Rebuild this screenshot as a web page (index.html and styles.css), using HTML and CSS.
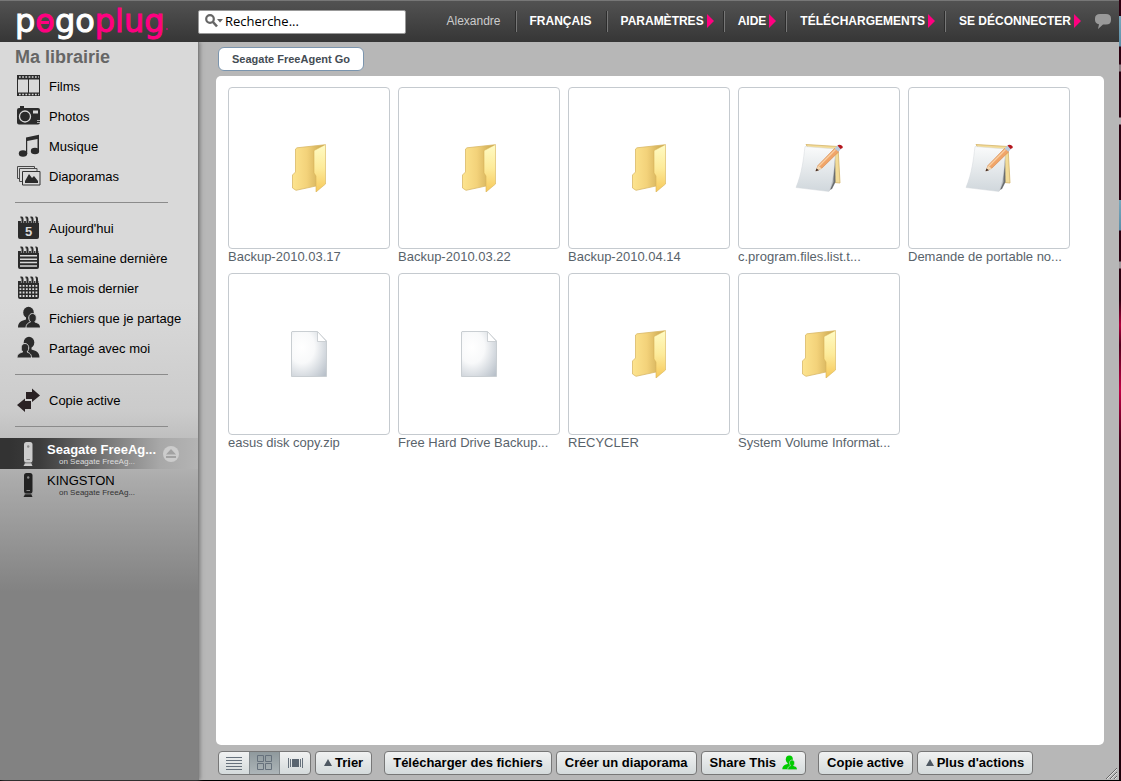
FILE: index.html
```html
<!DOCTYPE html>
<html lang="fr">
<head>
<meta charset="utf-8">
<title>Pogoplug</title>
<link rel="stylesheet" href="styles.css">
</head>
<body>
<svg class="defs" aria-hidden="true">
  <defs>
    <linearGradient id="g-back" x1="0" x2="1" y1="0" y2="0"><stop offset="0" stop-color="#fde48f"/><stop offset=".45" stop-color="#f3d27a"/><stop offset="1" stop-color="#c7a44e"/></linearGradient>
    <linearGradient id="g-front" x1="0" x2="0" y1="0" y2="1"><stop offset="0" stop-color="#fffbc4"/><stop offset=".5" stop-color="#fdeb9a"/><stop offset="1" stop-color="#f6c85a"/></linearGradient>
    <linearGradient id="g-note" x1="0" x2="0" y1="0" y2="1"><stop offset="0" stop-color="#fafbfb"/><stop offset="1" stop-color="#d0d7dc"/></linearGradient>
    <radialGradient id="g-file" cx=".3" cy=".35" r=".9"><stop offset="0" stop-color="#fff"/><stop offset=".4" stop-color="#f8f9fa"/><stop offset="1" stop-color="#b9c1ca"/></radialGradient>
    <symbol id="folder" viewBox="0 0 48 48">
      <path d="M10.500 5 12 3.800 39.500.800V38L31 42 11 46.300 7.500 44V31L10.500 28Z" fill="url(#g-back)" stroke="#d9b968" stroke-width=".8"/>
      <path d="M29 6.500 40.500.500V40L31 48V32L29 29Z" fill="url(#g-front)" stroke="#d8b357" stroke-width=".6"/>
    </symbol>
    <symbol id="note" viewBox="0 0 48 48">
      <path d="M11 .500 43 2.500 45 39 34 38Z" fill="#f3dc98" stroke="#d4b468" stroke-width=".8"/>
      <path d="M40 6 40.500 38 37 45 32 47Z" fill="#6b6e70"/>
      <path d="M38 6 38.500 38 34.500 47 30 46Z" fill="#b4b8bb"/>
      <path d="M10 2.500 40.500 5C39.500 23 39 34 34 47.500L1 43.500C7 29 8.500 15 10 2.500Z" fill="url(#g-note)" stroke="#d4d9dc" stroke-width=".5"/>
      <path d="M21 27 23 21.500 40 4 44 7.500 27 24Z" fill="#f0a569" stroke="#d48448" stroke-width=".6"/>
      <path d="M24 22 40.500 5.500" stroke="#fad0a2" stroke-width="1.200"/>
      <path d="M21 27 23 21.500 26.800 24.500Z" fill="#f2d7b2"/><path d="M20.500 27.300 21.500 24.600 24 26.300Z" fill="#3c2b24"/>
      <path d="M39.500 4.500 43 1.200 46.500 4.500 43.500 7.800Z" fill="#b9cbdc"/>
      <path d="M42.500 1.500C44-.500 49 1.500 47.500 4L45.500 5Z" fill="#b5161c"/>
    </symbol>
    <symbol id="file" viewBox="0 0 48 48">
      <path d="M7 1.500H32L41.500 11V46.500H6.500V2Z" fill="url(#g-file)" stroke="#c9ced2"/>
      <path d="M32.500 1.500 41.500 11.500H32.500Z" fill="#fff" stroke="#c3c8cc" stroke-width=".8"/>
    </symbol>
    <symbol id="cal" viewBox="0 0 24 24">
      <path d="M2 5H23V21Q23 23 21 23H4Q2 23 2 21Z" fill="#2b2b2b"/>
      <path d="M6.500 7V3Q6.500 1 4.500 1.500M11.500 7V3Q11.500 1 9.500 1.500M16.500 7V3Q16.500 1 14.500 1.500M21 7V3Q21 1 19.500 1.500" fill="none" stroke="#d9d9d9" stroke-width="3.200"/>
      <path d="M6.500 7V3Q6.500 1 4.500 1.500M11.500 7V3Q11.500 1 9.500 1.500M16.500 7V3Q16.500 1 14.500 1.500M21 7V3Q21 1 19.500 1.500" fill="none" stroke="#2b2b2b" stroke-width="2"/>
    </symbol>
    <symbol id="people" viewBox="0 0 24 24">
      <path d="M2 21.500C2 16 6 14.500 10 13.500V10.500H15V14L17 21.500Z" fill="currentColor"/>
      <ellipse cx="12.500" cy="6.500" rx="5.300" ry="5.800" fill="currentColor"/>
      <path class="halo" d="M10 22C10 18 12 17 14.500 16 11.500 13 12.500 7.500 16.500 7.500S21.500 13 18.800 16C22 17 24.500 18 24.500 22Z" fill="currentColor"/>
    </symbol>
    <symbol id="device" viewBox="0 0 10 24">
      <rect x="1" y="0" width="8.500" height="20.500" rx="2.500" fill="currentColor"/><path d="M2.500 20.500H8L9.500 24H.500Z" fill="currentColor"/>
      <path d="M1 21H9.500" stroke="#777" stroke-width=".8"/><circle cx="5.200" cy="4.500" r="1.200" class="led"/><path d="M3.500 17.500H7" class="slot"/>
    </symbol>
  </defs>
</svg>
<div class="page">
  <div class="app">
    <header class="top">
      <a class="logo" href="#" aria-label="pogoplug">p<span class="logo-eye">o</span>go<span class="logo-pink">plug</span></a>
      <label class="search">
        <svg width="18" height="14" viewBox="0 0 18 14"><circle cx="5" cy="5" r="3.800" fill="none" stroke="#666" stroke-width="2.200"/><path d="M8 8 12 12.500" stroke="#666" stroke-width="2.600"/><path d="M12 5H18L15 8.500Z" fill="#666"/></svg>
        <input type="text" value="Recherche..." aria-label="Recherche">
      </label>
      <nav class="menu">
        <span class="user">Alexandre</span>
        <a href="#">FRANÇAIS</a>
        <a href="#" class="more">PARAMÈTRES</a>
        <a href="#" class="more">AIDE</a>
        <a href="#" class="more">TÉLÉCHARGEMENTS</a>
        <a href="#" class="more">SE DÉCONNECTER</a>
        <button class="bubble" aria-label="Messages"><svg width="16" height="15" viewBox="0 0 16 15"><path d="M5 0H11Q16 0 16 4.500V6Q16 10.500 11 10.500H8L3 15 4 10.300Q0 9.500 0 6V4.500Q0 0 5 0Z" fill="#999"/></svg></button>
      </nav>
    </header>
    <div class="body">
      <aside class="side">
        <h2>Ma librairie</h2>
        <ul>
          <li><a href="#"><svg viewBox="0 0 24 24"><path d="M1 1H24V22H1Z" fill="#2b2b2b"/><path d="M2 5.500H12V18.500H2ZM13 5.500H23V18.500H13Z" fill="#d9d9d9"/><path d="M3 3H23M3 20.500H23" stroke="#d9d9d9" stroke-width="1.600" stroke-dasharray="1.700 1.500"/></svg>Films</a></li>
          <li><a href="#"><svg viewBox="0 0 24 24"><path d="M4 2H8V4H22Q24 4 24 6V18Q24 20.500 22 20.500H3Q1 20.500 1 18.500V6Q1 4 3 4H4Z" fill="#2b2b2b"/><circle cx="9" cy="12.500" r="5.500" fill="none" stroke="#d9d9d9" stroke-width="1.300"/><path d="M17 6.500H22V9.500H17Z" fill="#d9d9d9"/><path d="M21 16.500H24M21 18.500H24" stroke="#aaa"/></svg>Photos</a></li>
          <li><a href="#"><svg viewBox="0 0 24 24"><path d="M10 3.500 23 .800V17H21.500V5L11.200 7V20H10Z" fill="#2b2b2b"/><ellipse cx="7" cy="19.500" rx="4.200" ry="3.300" fill="#2b2b2b"/><ellipse cx="19" cy="17" rx="4.200" ry="3.300" fill="#2b2b2b"/></svg>Musique</a></li>
          <li><a href="#"><svg viewBox="0 0 24 24"><g fill="#d9d9d9" stroke="#4a4a4a"><path d="M1.500 2.500H18.500V14.500H1.500Z"/><path d="M3.500 4.500H21V17.500H3.500Z"/><path d="M6.500 7.500H24V21H6.500Z" stroke="#333"/></g><path d="M9 19V17L13 10 16 14 18 12 22 17V19Z" fill="#2b2b2b"/></svg>Diaporamas</a></li>
        </ul>
        <hr>
        <ul>
          <li><a href="#"><svg viewBox="0 0 24 24"><use href="#cal"/><text x="12.500" y="20" class="day">5</text></svg>Aujourd'hui</a></li>
          <li><a href="#"><svg viewBox="0 0 24 24"><use href="#cal"/><path d="M4 9.800H21M4 13.200H21M4 16.500H21M4 20H21" stroke="#d9d9d9" stroke-width="1.400"/></svg>La semaine dernière</a></li>
          <li><a href="#"><svg viewBox="0 0 24 24"><use href="#cal"/><path d="M3.500 9.800H22M3.500 13.200H22M3.500 16.500H22M3.500 20H22" stroke="#d9d9d9" stroke-width="1.800" stroke-dasharray="1.800 1.400"/></svg>Le mois dernier</a></li>
          <li><a href="#"><svg viewBox="0 0 24 24" class="dark"><use href="#people"/></svg>Fichiers que je partage</a></li>
          <li><a href="#"><svg viewBox="0 0 24 24" class="dark"><use href="#people" transform="translate(25.500 0) scale(-1 1)"/></svg>Partagé avec moi</a></li>
        </ul>
        <hr>
        <ul>
          <li><a href="#"><svg viewBox="0 0 24 24"><path d="M10 4H16V.500L24 7.500 16 14V11H10ZM15 13V21H9V24L1 17 9 10.500V13Z" fill="#2a2224"/></svg>Copie active</a></li>
        </ul>
        <hr>
        <ul class="drives">
          <li class="drive drive-on">
            <svg class="dev" viewBox="0 0 10 24"><use href="#device"/></svg>
            <a href="#"><strong>Seagate FreeAg...</strong><small>on Seagate FreeAg...</small></a>
            <button class="eject" aria-label="Éjecter"><svg width="16" height="16" viewBox="0 0 16 16"><circle cx="8" cy="8" r="8" fill="#ccc"/><path d="M8 3 13 8.500H3ZM3 10H13V12H3Z" fill="#a2a2a2"/></svg></button>
          </li>
          <li class="drive">
            <svg class="dev" viewBox="0 0 10 24"><use href="#device"/></svg>
            <a href="#"><span>KINGSTON</span><small>on Seagate FreeAg...</small></a>
          </li>
        </ul>
      </aside>
      <main class="main">
        <div class="tabs"><button class="tab">Seagate FreeAgent Go</button></div>
        <section class="files">
          <a class="item" href="#"><span class="thumb"><svg><use href="#folder"/></svg></span>Backup-2010.03.17</a>
          <a class="item" href="#"><span class="thumb"><svg><use href="#folder"/></svg></span>Backup-2010.03.22</a>
          <a class="item" href="#"><span class="thumb"><svg><use href="#folder"/></svg></span>Backup-2010.04.14</a>
          <a class="item" href="#"><span class="thumb"><svg><use href="#note"/></svg></span>c.program.files.list.t...</a>
          <a class="item" href="#"><span class="thumb"><svg><use href="#note"/></svg></span>Demande de portable no...</a>
          <a class="item" href="#"><span class="thumb"><svg><use href="#file"/></svg></span>easus disk copy.zip</a>
          <a class="item" href="#"><span class="thumb"><svg><use href="#file"/></svg></span>Free Hard Drive Backup...</a>
          <a class="item" href="#"><span class="thumb"><svg><use href="#folder"/></svg></span>RECYCLER</a>
          <a class="item" href="#"><span class="thumb"><svg><use href="#folder"/></svg></span>System Volume Informat...</a>
        </section>
        <footer class="bar">
          <div class="views">
            <button aria-label="Liste"><svg width="16" height="14" viewBox="0 0 16 14"><path d="M0 1.500H16M0 4.500H16M0 7.500H16M0 10.500H16M0 13.500H16" stroke="#66717c"/></svg></button>
            <button class="on" aria-label="Grille"><svg width="15" height="15" viewBox="0 0 15 15"><path d="M.500.500H6.500V6.500H.500ZM8.500.500H14.500V6.500H8.500ZM.500 8.500H6.500V14.500H.500ZM8.500 8.500H14.500V14.500H8.500Z" fill="none" stroke="#66717c"/></svg></button>
            <button aria-label="Défilement"><svg width="15" height="10" viewBox="0 0 15 10"><path d="M.500 0V10M2.500 1V9M12.500 1V9M14.500 0V10" stroke="#66717c"/><path d="M4 1H11V9H4Z" fill="#5a6570"/></svg></button>
          </div>
          <button class="btn up">Trier</button>
          <button class="btn apart">Télécharger des fichiers</button>
          <button class="btn">Créer un diaporama</button>
          <button class="btn share">Share This<svg width="16" height="16" viewBox="0 0 24 24"><use href="#people"/></svg></button>
          <button class="btn apart">Copie active</button>
          <button class="btn up">Plus d'actions</button>
          <svg class="grip" width="12" height="12" viewBox="0 0 12 12"><path d="M1 12 12 1M5 12 12 5M9 12 12 9" stroke="#666"/><path d="M2 12 12 2M6 12 12 6M10 12 12 10" stroke="#eee" stroke-width=".8"/></svg>
        </footer>
      </main>
    </div>
  </div>
  <div class="edge"></div>
</div>
</body>
</html>
```
FILE: styles.css
```css
* { box-sizing: border-box; }
body { margin: 0; font-family: "Liberation Sans", Arial, sans-serif; font-size: 13px; color: #000; }
a { color: inherit; text-decoration: none; }
button { font: inherit; color: inherit; padding: 0; border: 0; background: none; }
ul { list-style: none; margin: 0; padding: 0; }
.defs { position: absolute; width: 0; height: 0; }

.page { display: flex; min-height: 100vh; border-bottom: 1px solid #000; }
.app { flex: 1; display: flex; flex-direction: column; min-width: 0; background: #b7b7b7; }
.edge {
  width: 2px;
  background: linear-gradient(#2c0010 16px, #79a9bd 16px, #5b8ea8 46px, #2c0010 47px, #2c0010 64px, #8a7d82 65px, #8a7d82 71px, #2c0010 72px, #2c0010 117px, #b9b2b5 118px, #b9b2b5 124px, #2c0010 125px, #2c0010 200px, #79a9bd 200px, #5b8ea8 230px, #2c0010 231px, #2c0010 261px, #a0999c 262px, #a0999c 268px, #2c0010 269px, #2c0010 300px, #b0003c 325px, #50001c 345px, #c00044 390px, #4a001a 440px, #1c000a 520px);
}

.top { position: relative; display: flex; align-items: center; height: 42px; border-top: 1px solid #777; background: linear-gradient(#525252, #363636); }
.logo { position: relative; width: 182px; padding-left: 15px; font-family: "DejaVu Sans", sans-serif; font-size: 32px; line-height: 40px; height: 42px; color: #fff; -webkit-text-stroke: 1px; }
.logo-pink, .logo-eye { color: #ff0080; }
.logo-eye { position: relative; }
.logo-eye::after { content: ""; position: absolute; left: 6px; top: 19px; width: 8px; height: 3px; background: #ff0080; }
.logo::after { content: ""; position: absolute; left: 166px; top: 27px; width: 2px; height: 2px; background: #a01860; }
.search { display: flex; align-items: center; gap: 2px; flex: 0 1 208px; height: 24px; margin-left: 16px; padding: 0 6px 2px; background: #fff; border: 1px solid #999; border-radius: 2px; }
.search svg { flex: none; }
.search input { flex: 1; min-width: 0; padding: 0; border: 0; outline: 0; background: none; font: 13px "Open Sans", sans-serif; color: #000; }
.menu { display: flex; align-items: center; margin-left: auto; font-size: 12px; line-height: 21px; color: #fff; white-space: nowrap; }
.user { padding-right: 15px; color: #ccc; }
.menu a { padding: 0 15px 0 13px; font-weight: bold; border-left: 1px solid #777; box-shadow: -1px 0 #2c2c2c; }
.menu .more { padding-right: 10px; }
.more::after { content: ""; display: inline-block; margin-left: 3px; vertical-align: -3px; border-left: 7px solid #ff0080; border-top: 7px solid transparent; border-bottom: 7px solid transparent; }
.bubble { display: flex; margin: 0 8px 0 4px; }

.body { flex: 1; display: flex; }
.side { width: 199px; flex: none; background: linear-gradient(#d9d9d9 260px, #cbcbcb 370px, #aaa 440px, #828282 550px); border-right: 1px solid #808080; box-shadow: 1px 0 4px #777; }
.side h2 { margin: 0; padding: 1px 0 0 15px; font-size: 18px; line-height: 28px; color: #666; }
.side hr { margin: 11px 30px 10px 15px; border: 0; border-top: 1px solid #8b8b8b; }
.side li > a { display: flex; align-items: center; gap: 9px; height: 30px; padding-left: 16px; }
.side li > a svg { width: 24px; height: 24px; flex: none; overflow: visible; }
.dark { color: #2b2b2b; }
.halo { stroke: #d0d0d0; stroke-width: 1px; }
.day { font-size: 13px; font-weight: bold; fill: #d9d9d9; text-anchor: middle; }
.side .drive { display: flex; align-items: center; height: 31px; padding: 0 19px 0 23px; color: #222; }
.side .drive-on { background: linear-gradient(90deg, #333 10px, #3c3c3c 40px, #a8a8a8 160px, #b4b4b4); color: #ccc; margin-top: 11px; }
.dev { width: 10px; height: 24px; }
.side .drive > a { display: block; flex: 1; height: 31px; padding: 4px 0 0 14px; line-height: 15px; color: #000; }
.side .drive-on > a { color: #fff; }
.drive strong, .drive span, .drive small { display: block; white-space: nowrap; }
.drive small { padding-left: 12px; font-size: 8px; line-height: 9px; color: #333; }
.drive-on small { color: #ddd; }
.led { fill: #888; }
.slot { stroke: #888; }
.eject { display: flex; }

.main { flex: 1; display: flex; flex-direction: column; min-width: 0; padding: 5px 15px 0 17px; }
.tabs { display: flex; padding-left: 2px; }
.tab { height: 24px; padding: 0 13px; font-size: 11px; font-weight: bold; color: #444c54; background: #fff; border: 1px solid #7b95ae; border-radius: 6px; }
.files { flex: 1; display: grid; grid-template-columns: repeat(auto-fill, 162px); align-content: start; gap: 8px; margin-top: 5px; padding: 11px 12px; background: #fff; border-radius: 5px; }
.item { color: #59636b; line-height: 16px; white-space: nowrap; }
.thumb { display: flex; align-items: center; justify-content: center; height: 162px; border: 1px solid #c5cacf; border-radius: 4px; }
.thumb svg { width: 48px; height: 48px; overflow: visible; }

.bar { display: flex; align-items: center; gap: 4px; height: 35px; padding: 0 0 0 2px; }
.views { display: flex; height: 24px; border: 1px solid #777; border-radius: 4px; overflow: hidden; background: linear-gradient(#f1f2f2, #d4dadb); }
.views button { display: flex; align-items: center; justify-content: center; width: 30px; }
.views .on { width: 31px; background: linear-gradient(#8f999d, #adb5b8); border: 1px solid #848b8f; border-width: 0 1px; }
.btn { display: flex; align-items: center; height: 24px; padding: 0 8px; font-weight: bold; white-space: nowrap; border: 1px solid #777; border-radius: 4px; background: linear-gradient(#f1f2f2, #d4dadb); }
.apart { margin-left: 8px; }
.up::before { content: ""; margin-right: 3px; border: 4px solid transparent; border-top: 0; border-bottom: 7px solid #4e5862; }
.share svg { margin-left: 5px; color: #0c0; }
.share .halo { stroke: #dfe3e3; }
.grip { margin: 0 -13px 1px auto; align-self: flex-end; }
```
